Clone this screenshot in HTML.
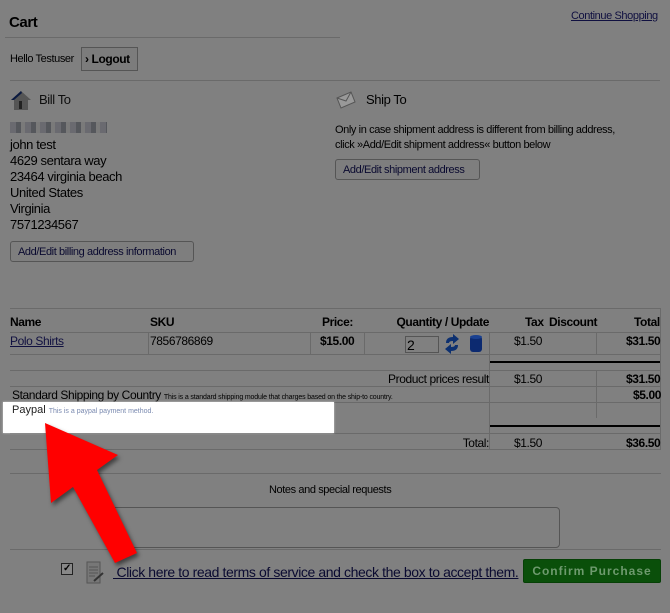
<!DOCTYPE html>
<html><head><meta charset="utf-8"><style>
*{margin:0;padding:0;box-sizing:border-box}
body{width:670px;height:613px;background:#808080;font-family:"Liberation Sans",sans-serif;color:#000;position:relative;overflow:hidden;letter-spacing:-0.4px}
.a{position:absolute;white-space:nowrap}
.hl{position:absolute;height:1px;background:#6a6a6a}
.vl{position:absolute;width:1px;background:#6a6a6a}
.btn{position:absolute;border:1px solid #555;border-radius:3px;background:#7e7e7e;font-size:11px;color:#0a0a30;padding:0 7px;display:flex;align-items:center;white-space:nowrap}
.f12{font-size:12px}
.b{font-weight:bold}
.r{text-align:right}
</style></head><body>
<div class="a b" style="left:9px;top:14px;font-size:15px">Cart</div>
<div class="a" style="left:571px;top:10px;font-size:11px;color:#101040;text-decoration:underline">Continue Shopping</div>
<div class="hl" style="left:5px;top:37px;width:335px"></div>
<div class="a" style="left:10px;top:53px;font-size:11px">Hello Testuser</div>
<div class="a" style="left:81px;top:47px;width:57px;height:24px;border:1px solid #555;background:#7c7c7c;font-size:12px;font-weight:bold;padding:4px 0 0 3px">› Logout</div>
<div class="hl" style="left:10px;top:80px;width:650px"></div>
<svg class="a" style="left:10px;top:89px" width="22" height="22" viewBox="0 0 22 22"><polygon points="1,11 11,2 21,11 18,11 18,21 4,21 4,11" fill="#555"/><polygon points="1,11 11,2 12,4 4,11" fill="#0b1a40"/><rect x="9" y="12" width="3" height="8" fill="#222"/></svg>
<div class="a" style="left:39px;top:92px;font-size:13px;color:#0e0e0e">Bill To</div>
<div class="a" style="left:10px;top:122px;width:97px;height:11px;background:repeating-linear-gradient(90deg,#6a6a70 0 6px,#55575c 6px 11px,#7a7a7a 11px 15px)"></div>
<div class="a" style="left:10px;top:137px;font-size:13px;line-height:16px">john test<br>4629 sentara way<br>23464 virginia beach<br>United States<br>Virginia<br>7571234567</div>
<div class="btn" style="left:10px;top:241px;width:184px;height:21px">Add/Edit billing address information</div>
<svg class="a" style="left:335px;top:90px" width="22" height="20" viewBox="0 0 22 20"><polygon points="2,8 16,2 20,12 6,18" fill="#999" stroke="#555"/><polyline points="2,8 11,11 16,2" fill="none" stroke="#555"/></svg>
<div class="a" style="left:366px;top:92px;font-size:13px">Ship To</div>
<div class="a" style="left:335px;top:123px;font-size:11px;line-height:15px">Only in case shipment address is different from billing address,<br>click »Add/Edit shipment address« button below</div>
<div class="btn" style="left:335px;top:159px;width:145px;height:21px">Add/Edit shipment address</div>

<!-- table -->
<div class="hl" style="left:10px;top:308px;width:651px"></div>
<div class="vl" style="left:660px;top:308px;height:141px"></div>
<div class="a b f12" style="left:10px;top:315px">Name</div>
<div class="a b f12" style="left:150px;top:315px">SKU</div>
<div class="a b f12" style="left:322px;top:315px">Price:</div>
<div class="a b f12 r" style="right:181px;top:315px">Quantity / Update</div>
<div class="a b f12" style="left:525px;top:315px">Tax</div>
<div class="a b f12" style="left:549px;top:315px">Discount</div>
<div class="a b f12" style="left:634px;top:315px">Total</div>
<div class="hl" style="left:10px;top:332px;width:651px"></div>
<div class="a f12" style="left:10px;top:334px;color:#101040;text-decoration:underline">Polo Shirts</div>
<div class="a f12" style="left:150px;top:334px">7856786869</div>
<div class="a b f12" style="left:320px;top:334px">$15.00</div>
<div class="a" style="left:405px;top:336px;width:34px;height:17px;border:1px solid #555;background:#808080;font-size:14px;padding-left:1px;line-height:17px">2</div>
<svg class="a" style="left:443px;top:334px" width="18" height="20" viewBox="0 0 18 20"><path d="M3 9 Q3 3 10 3 L10 0 L16 5 L10 10 L10 7 Q6 7 6 9 Z M15 11 Q15 17 8 17 L8 20 L2 15 L8 10 L8 13 Q12 13 12 11 Z" fill="#0d3070"/></svg>
<svg class="a" style="left:469px;top:334px" width="14" height="19" viewBox="0 0 14 19"><rect x="1" y="2" width="12" height="16" rx="3" fill="#0c2a70"/><ellipse cx="7" cy="3" rx="6" ry="2" fill="#1a4090"/></svg>
<div class="a f12" style="left:514px;top:334px">$1.50</div>
<div class="a b f12" style="left:626px;top:334px">$31.50</div>
<div class="vl" style="left:148px;top:332px;height:22px"></div>
<div class="vl" style="left:310px;top:332px;height:22px"></div>
<div class="vl" style="left:364px;top:332px;height:22px"></div>
<div class="vl" style="left:489px;top:332px;height:117px"></div>
<div class="vl" style="left:596px;top:332px;height:22px"></div>
<div class="hl" style="left:10px;top:354px;width:651px"></div>
<div class="a" style="left:490px;top:361px;width:170px;height:2px;background:#000"></div>
<div class="hl" style="left:10px;top:370px;width:651px"></div>
<div class="a f12 r" style="right:181px;top:372px">Product prices result</div>
<div class="a f12" style="left:514px;top:372px">$1.50</div>
<div class="a b f12" style="left:626px;top:372px">$31.50</div>
<div class="vl" style="left:596px;top:370px;height:48px"></div>
<div class="hl" style="left:10px;top:386px;width:651px"></div>
<div class="a" style="left:12px;top:388px;font-size:12px">Standard Shipping by Country <span style="font-size:7px;letter-spacing:-0.15px">This is a standard shipping module that charges based on the ship-to country.</span></div>
<div class="a b f12" style="left:633px;top:388px">$5.00</div>
<div class="hl" style="left:10px;top:402px;width:651px"></div>
<div class="a" style="left:490px;top:425px;width:170px;height:2px;background:#000"></div>
<div class="hl" style="left:10px;top:433px;width:651px"></div>
<div class="a f12 r" style="right:181px;top:436px">Total:</div>
<div class="a f12" style="left:514px;top:436px">$1.50</div>
<div class="a b f12" style="left:626px;top:436px">$36.50</div>
<div class="hl" style="left:10px;top:449px;width:651px"></div>

<!-- highlight -->
<div class="a" style="left:3px;top:402px;width:331px;height:31px;background:#fff;box-shadow:0 0 2px #ccc"></div>
<div class="a" style="left:12px;top:404px;font-size:11px;color:#222;letter-spacing:0">Paypal <span style="font-size:7px;color:#7a8ab0">This is a paypal payment method.</span></div>

<div class="hl" style="left:10px;top:473px;width:651px"></div>
<div class="a" style="left:269px;top:484px;font-size:11px">Notes and special requests</div>
<div class="a" style="left:110px;top:507px;width:450px;height:41px;border:1px solid #555;border-radius:4px"></div>
<div class="hl" style="left:10px;top:549px;width:651px"></div>
<div class="a" style="left:61px;top:563px;width:12px;height:12px;border:1px solid #222;background:#888;font-size:10px;line-height:10px;text-align:center;font-weight:bold">✓</div>
<svg class="a" style="left:85px;top:561px" width="20" height="24" viewBox="0 0 20 24"><rect x="2" y="1" width="13" height="21" fill="#777" stroke="#555"/><path d="M4 6h9M4 9h9M4 12h9M4 15h6" stroke="#555"/><path d="M9 20 L18 12" stroke="#333" stroke-width="2"/></svg>
<div class="a" style="left:113px;top:564px;font-size:14px;color:#0a0a30;text-decoration:underline;letter-spacing:-0.4px">&nbsp;Click here to read terms of service and check the box to accept them.</div>
<div class="a" style="left:523px;top:559px;width:138px;height:24px;background:#0a4f0a;border:1px solid #064006;border-radius:2px;color:#6e9a6e;font-size:12px;font-weight:bold;letter-spacing:1px;text-align:center;line-height:22px">Confirm Purchase</div>

<!-- arrow -->
<svg class="a" style="left:0;top:0;filter:drop-shadow(2px 3px 2px rgba(0,0,0,.5))" width="670" height="613" viewBox="0 0 670 613"><polygon points="45,423 118,455 97,470 137,553 115,563 73,487 51,503" fill="#ff0000"/></svg>
</body></html>
